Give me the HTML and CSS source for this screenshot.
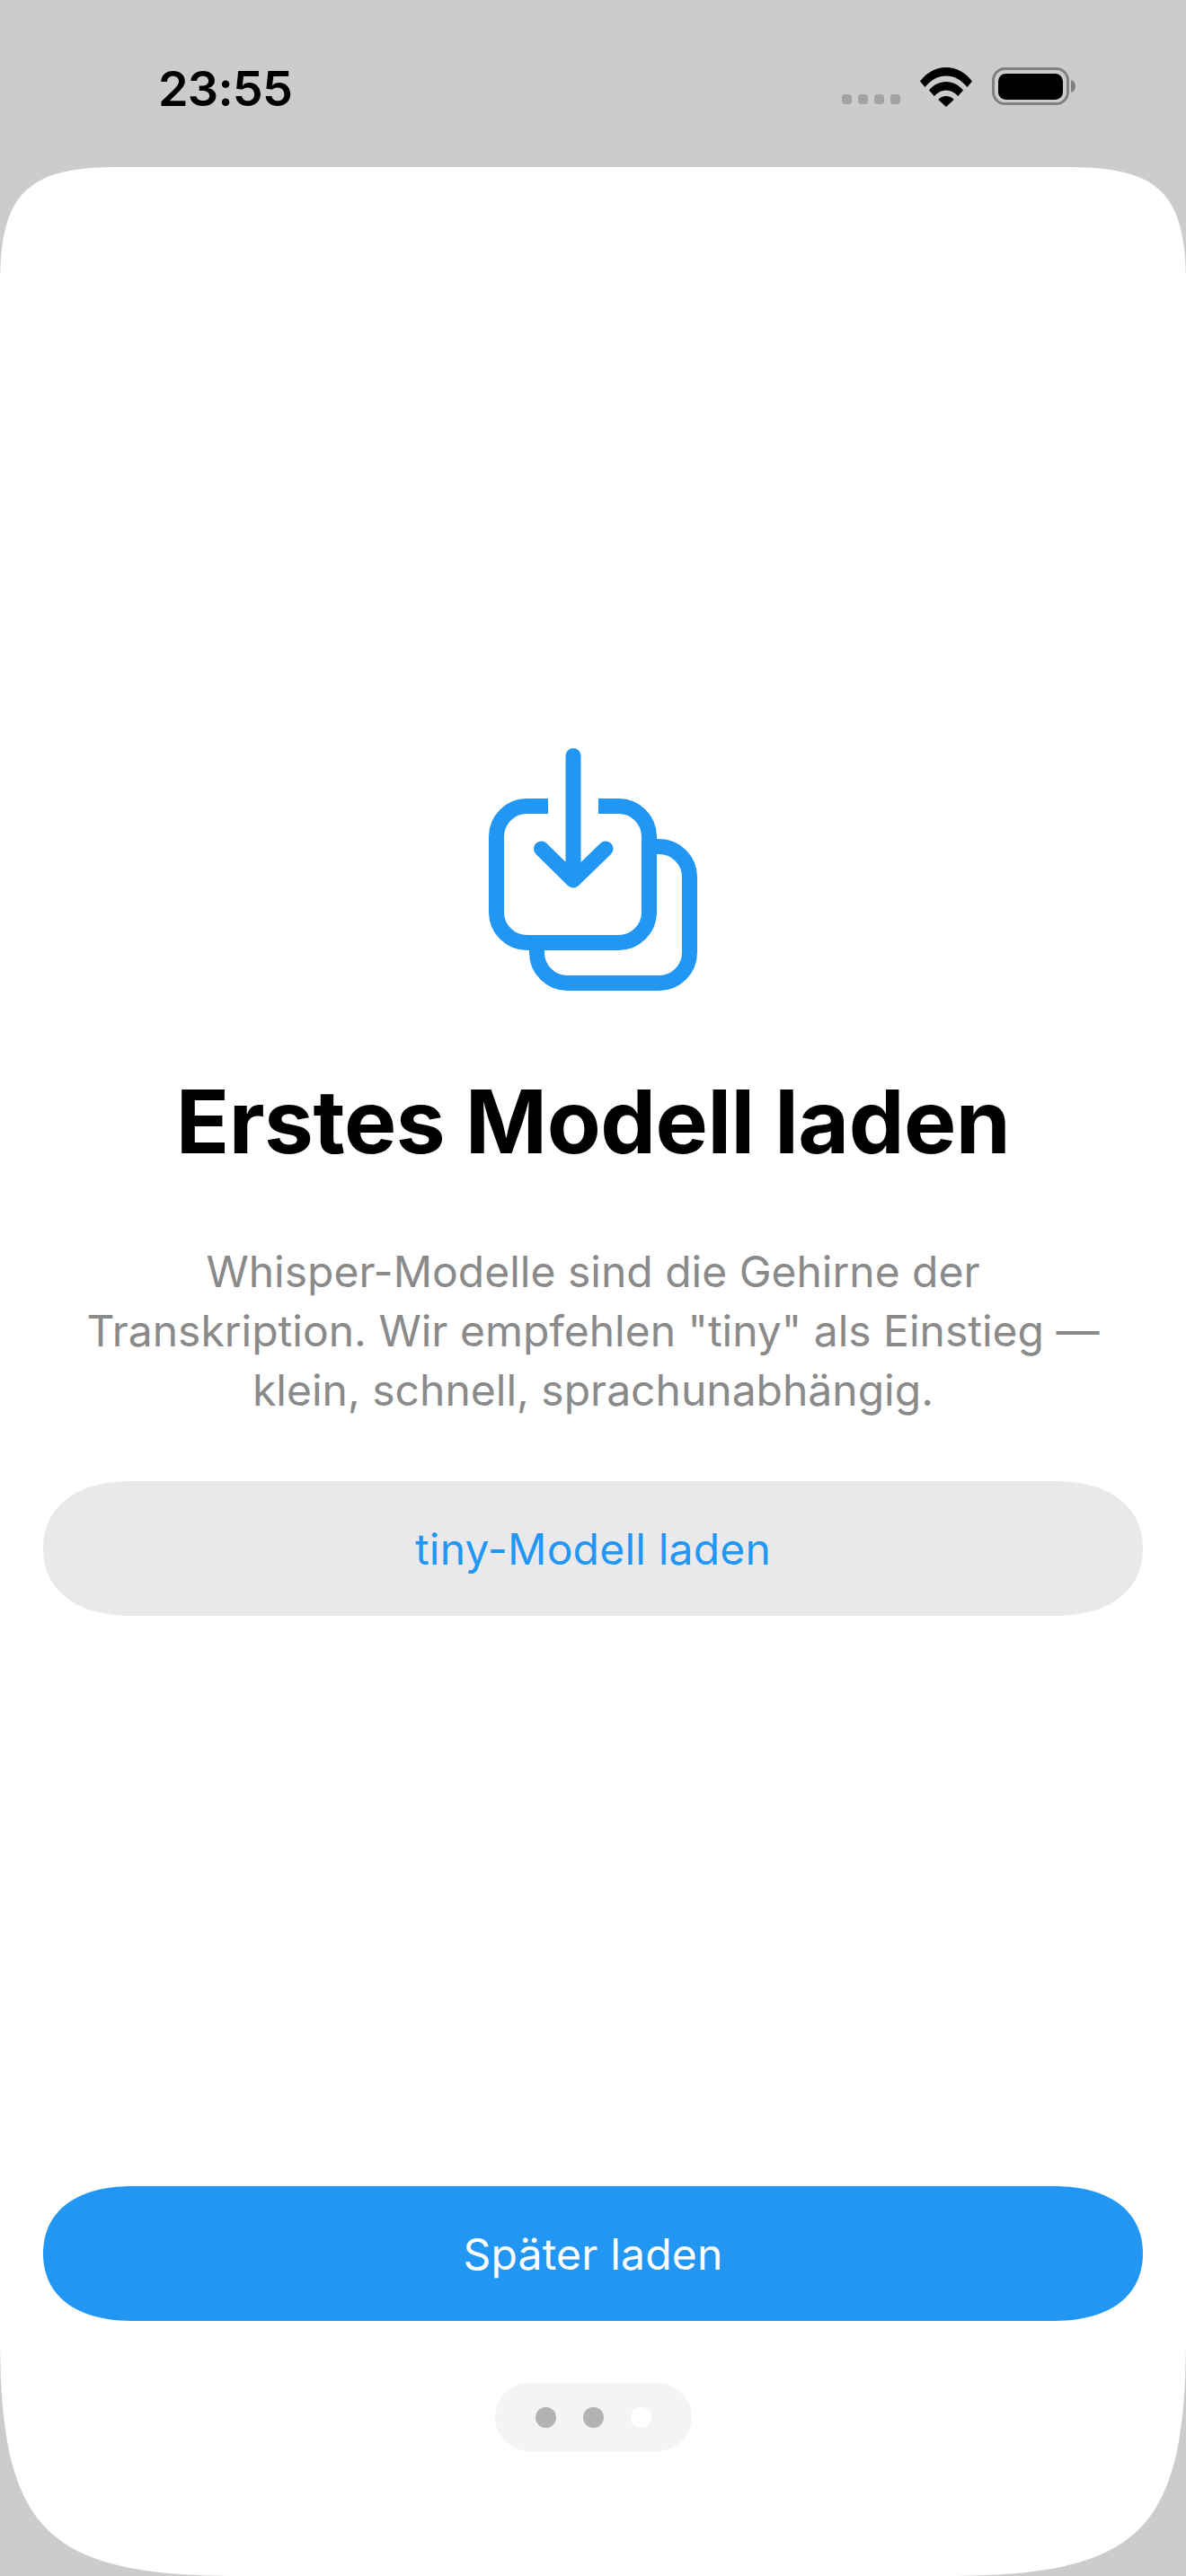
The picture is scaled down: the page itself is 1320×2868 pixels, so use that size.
FILE: index.html
```html
<!DOCTYPE html>
<html lang="de">
<head>
<meta charset="utf-8">
<title>Erstes Modell laden</title>
<link rel="stylesheet" href="styles.css">
</head>
<body>
<div class="status-bar">
  <span class="clock">23:55</span>
  <div class="status-icons">
    <div class="signal"><i></i><i></i><i></i><i></i></div>
    <svg class="wifi" viewBox="0 0 58 44" aria-hidden="true">
      <path d="M0 15.500C7.500 5.500 18 0 29 0s21.500 5.500 29 15.500l-5.500 6.500C46 14 38 9.500 29 9.500S12 14 5.500 22z"/>
      <path d="M10 25.500C15 19.500 21.500 16 29 16s14 3.500 19 9.500l-5.800 6.500C38.500 27.800 34 25.500 29 25.500S19.500 27.800 15.800 32z"/>
      <path d="M20.300 36C22.500 33.500 25.500 32 29 32s6.500 1.500 8.700 4L29 44z"/>
    </svg>
    <svg class="battery" viewBox="0 0 93 44" aria-hidden="true">
      <rect class="battery-shell" x="1.500" y="1.500" width="83" height="39" rx="13"/>
      <rect x="7" y="7" width="72" height="29" rx="8.500"/>
      <path class="battery-cap" d="M88 14c3 .8 5 3.500 5 7s-2 6.200-5 7z"/>
    </svg>
  </div>
</div>

<main class="sheet">
  <section class="intro">
    <svg class="hero-icon" viewBox="0 0 232 270" aria-hidden="true">
      <path d="M66 64.500H42.500a34 34 0 0 0-34 34v84a34 34 0 0 0 34 34h102a34 34 0 0 0 34-34v-84a34 34 0 0 0-34-34H122"/>
      <path d="M187 109.500h2.500a34 34 0 0 1 34 34v84a34 34 0 0 1-34 34h-102a34 34 0 0 1-34-34V225"/>
      <path class="hero-arrow" d="M94 8.500V147M58.500 112L94 147l36-35"/>
    </svg>
    <h1 class="title">Erstes Modell laden</h1>
    <p class="lead">Whisper-Modelle sind die Gehirne der Transkription. Wir empfehlen "tiny" als Einstieg — klein, schnell, sprachunabhängig.</p>
    <button class="btn btn-soft" type="button">tiny-Modell laden</button>
  </section>

  <footer class="actions">
    <button class="btn btn-primary" type="button">Später laden</button>
    <div class="pager">
      <span class="dot"></span>
      <span class="dot"></span>
      <span class="dot dot-current"></span>
    </div>
  </footer>
</main>
</body>
</html>
```

FILE: styles.css
```css
* {
  box-sizing: border-box;
}

html,
body {
  margin: 0;
  padding: 0;
}

body {
  width: 1320px;
  height: 2868px;
  overflow: hidden;
  display: flex;
  flex-direction: column;
  background: #cccccc;
  font-family: Inter, "Liberation Sans", sans-serif;
  color: #000;
}

/* Status bar */
.status-bar {
  height: 186px;
  flex: none;
  display: flex;
  justify-content: space-between;
  padding: 69px 123px 0 176px;
}

.clock {
  font-size: 54px;
  line-height: 60px;
  font-weight: 600;
  letter-spacing: -0.8px;
}

.status-icons {
  display: flex;
  align-items: flex-start;
  padding-top: 6px;
}

.signal {
  display: flex;
  gap: 7px;
  margin-top: 30px;
  margin-right: 22px;
}

.signal i {
  width: 11px;
  height: 11px;
  border-radius: 3.5px;
  background: #a3a3a3;
}

.wifi {
  width: 58px;
  height: 44px;
  margin-right: 22px;
}

.battery {
  width: 93px;
  height: 44px;
}

.battery-shell {
  fill: none;
  stroke: #808080;
  stroke-width: 3px;
}

.battery-cap {
  fill: #808080;
}

/* White sheet with continuous corners */
.sheet {
  flex: 1;
  display: flex;
  flex-direction: column;
  justify-content: space-between;
  background: #fff;
  padding: 647px 48px 139px;
  clip-path: path("M130 0H1190C1290 0 1320 30 1320 130V2414C1320 2632 1270 2682 1052 2682H268C50 2682 0 2632 0 2414V130C0 30 30 0 130 0Z");
}

.intro {
  display: flex;
  flex-direction: column;
  align-items: center;
}

.hero-icon {
  width: 232px;
  height: 270px;
  fill: none;
  stroke: #2196f3;
  stroke-width: 17px;
}

.hero-arrow {
  stroke-linecap: round;
  stroke-linejoin: round;
}

.title {
  margin: 91px 0 0;
  font-size: 98px;
  line-height: 110px;
  font-weight: 700;
  letter-spacing: -0.5px;
  white-space: nowrap;
}

.lead {
  width: 1160px;
  margin: 79px 0 0;
  font-size: 48px;
  line-height: 66px;
  text-align: center;
  color: #8a8a8a;
}

/* Pill with slightly squared-off ends */
.btn {
  display: block;
  width: 100%;
  height: 150px;
  border: 0;
  clip-path: path("M100 0H1124C1194 0 1224 33 1224 75S1194 150 1124 150H100C30 150 0 117 0 75S30 0 100 0Z");
  font-family: inherit;
  font-size: 48px;
  font-weight: 400;
  letter-spacing: 0.2px;
}

.btn-soft {
  margin-top: 68px;
  background: #e9e9eb;
  color: #2196f3;
}

.btn-primary {
  background: #2196f3;
  color: #fff;
}

.actions {
  display: flex;
  flex-direction: column;
  align-items: center;
}

.pager {
  width: 219px;
  height: 76px;
  margin-top: 69px;
  display: flex;
  align-items: center;
  justify-content: center;
  gap: 30px;
  border-radius: 38px;
  background: #f4f4f4;
}

.dot {
  width: 23px;
  height: 23px;
  border-radius: 50%;
  background: #b3b3b3;
}

.dot-current {
  background: #fff;
}
```
